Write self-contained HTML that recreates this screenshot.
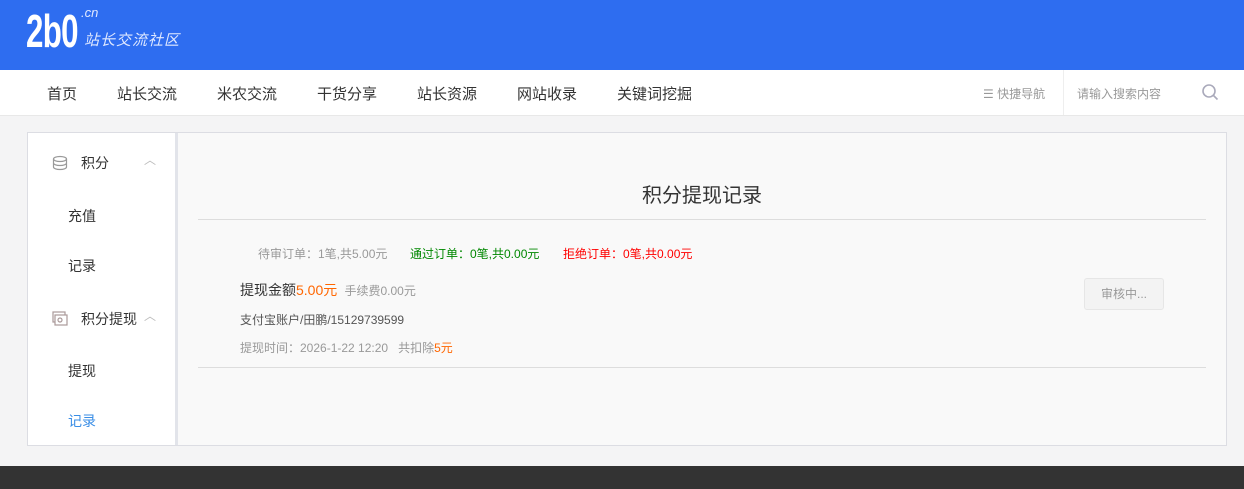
<!DOCTYPE html>
<html><head><meta charset="utf-8"><style>
*{margin:0;padding:0;box-sizing:border-box}
body{width:1244px;height:489px;overflow:hidden;background:#f4f4f5;font-family:"Liberation Sans","Noto Sans CJK SC",sans-serif;position:relative}
.hd{position:absolute;left:0;top:0;width:1244px;height:70px;background:#2e6df0}
.logo{position:absolute;left:26px;top:4px;color:#fff;font-weight:bold;font-size:46px;letter-spacing:-1px;transform:scaleX(.68);transform-origin:left}
.cn{position:absolute;left:81px;top:5px;color:#dfe8ff;font-style:italic;font-size:13px}
.slog{position:absolute;left:84px;top:29px;color:#dfe8ff;font-style:italic;font-size:15px;letter-spacing:1px}
.nav{position:absolute;left:0;top:70px;width:1244px;height:46px;background:#fff;border-bottom:1px solid #e8e8e8}
.nav span{position:absolute;top:13px;font-size:15px;color:#333}
.qn{position:absolute;left:983px;top:15px;font-size:12px;color:#999}
.sep{position:absolute;left:1063px;top:0;width:1px;height:45px;background:#eee}
.sr{position:absolute;left:1077px;top:15px;font-size:12px;color:#999}
.box{position:absolute;left:27px;top:132px;width:1200px;height:314px;border:1px solid #dcdde3;background:#f9f9f9}
.side{position:absolute;left:0;top:0;width:150px;height:312px;background:#fff;border-right:3px solid #e2e4ea}
.side div{position:absolute;font-size:14px;color:#333}
.ft{position:absolute;left:0;top:466px;width:1244px;height:23px;background:#333}
.t{position:absolute;font-size:12px}
</style></head><body>
<div class="hd"><div class="logo">2b0</div><div class="cn">.cn</div><div class="slog">站长交流社区</div></div>
<div class="nav">
<span style="left:47px">首页</span><span style="left:117px">站长交流</span><span style="left:217px">米农交流</span><span style="left:317px">干货分享</span><span style="left:417px">站长资源</span><span style="left:517px">网站收录</span><span style="left:617px">关键词挖掘</span>
<div class="qn">☰ 快捷导航</div><div class="sep"></div><div class="sr">请输入搜索内容</div>
<svg style="position:absolute;left:1201px;top:13px" width="18" height="18" viewBox="0 0 18 18"><circle cx="8" cy="8" r="6" fill="none" stroke="#aab" stroke-width="1.6"/><path d="M12.5 12.5L16.5 16.5" stroke="#aab" stroke-width="1.6"/></svg>
</div>
<div class="box">
<div class="side">
<svg style="position:absolute;left:24px;top:22px" width="16" height="16" viewBox="0 0 16 16" fill="none" stroke="#999" stroke-width="1.2"><ellipse cx="8" cy="4" rx="6.5" ry="2.5"/><path d="M1.5 4v8c0 1.4 2.9 2.5 6.5 2.5s6.5-1.1 6.5-2.5V4M1.5 8c0 1.4 2.9 2.5 6.5 2.5s6.5-1.1 6.5-2.5"/></svg>
<div style="left:53px;top:20px">积分</div><div style="left:116px;top:18px;color:#bbb;font-size:12px">︿</div>
<div style="left:40px;top:73px">充值</div>
<div style="left:40px;top:123px">记录</div>
<svg style="position:absolute;left:24px;top:178px" width="16" height="15" viewBox="0 0 16 15" fill="none" stroke="#a99" stroke-width="1.2"><rect x="1" y="1" width="12" height="10"/><rect x="3" y="4" width="12" height="10" fill="#fff"/><circle cx="8" cy="9" r="2"/></svg>
<div style="left:53px;top:176px">积分提现</div><div style="left:116px;top:174px;color:#bbb;font-size:12px">︿</div>
<div style="left:40px;top:228px">提现</div>
<div style="left:40px;top:278px;color:#3a8ee6">记录</div>
</div>
<div style="position:absolute;left:614px;top:46px;font-size:20px;color:#333">积分提现记录</div>
<div style="position:absolute;left:170px;top:86px;width:1008px;height:1px;background:#ddd"></div>
<div class="t" style="left:230px;top:112px;color:#999">待审订单：1笔,共5.00元</div>
<div class="t" style="left:382px;top:112px;color:#080">通过订单：0笔,共0.00元</div>
<div class="t" style="left:535px;top:112px;color:#f00">拒绝订单：0笔,共0.00元</div>
<div style="position:absolute;left:212px;top:147px;font-size:14px;color:#333">提现金额<span style="color:#f60">5.00元</span> <span style="font-size:12px;color:#999">&nbsp;手续费0.00元</span></div>
<div class="t" style="left:212px;top:178px;color:#555">支付宝账户/田鹏/15129739599</div>
<div class="t" style="left:212px;top:206px;color:#999">提现时间：2026-1-22 12:20 &nbsp;&nbsp;共扣除<span style="color:#f60">5元</span></div>
<div style="position:absolute;left:1056px;top:145px;width:80px;height:32px;border:1px solid #e6e6e6;border-radius:3px;background:#f3f3f3;font-size:12px;color:#999;text-align:center;line-height:30px">审核中...</div>
<div style="position:absolute;left:170px;top:234px;width:1008px;height:1px;background:#ddd"></div>
</div>
<div class="ft"></div>
</body></html>
